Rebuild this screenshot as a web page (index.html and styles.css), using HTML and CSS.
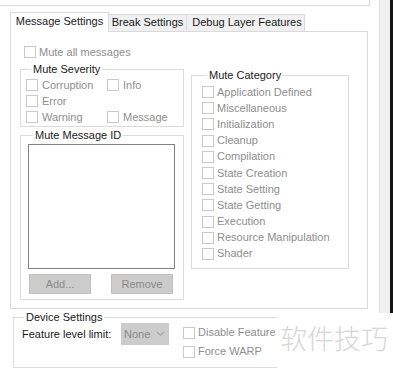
FILE: index.html
```html
<!DOCTYPE html>
<html>
<head>
    <meta charset="UTF-8">
    <title>Debug Layer</title>
    <link rel="stylesheet" href="styles.css">
</head>
<body>
<div class="dialog">
    <div class="topbox"></div>
    <div class="tabs">
        <div class="tab tab-active">Message Settings</div>
        <div class="tab tab-break">Break Settings</div>
        <div class="tab tab-debug">Debug Layer Features</div>
    </div>
    <div class="page">
        <div class="check-row mute-all"><span class="box"></span>Mute all messages</div>
        <div class="cols">
            <div class="col-left">
                <fieldset class="group severity">
                    <legend>Mute Severity</legend>
                    <div class="sev-grid">
                        <div class="check-row"><span class="box"></span>Corruption</div>
                        <div class="check-row"><span class="box"></span>Info</div>
                        <div class="check-row"><span class="box"></span>Error</div>
                        <div class="check-row"></div>
                        <div class="check-row"><span class="box"></span>Warning</div>
                        <div class="check-row"><span class="box"></span>Message</div>
                    </div>
                </fieldset>
                <fieldset class="group msgid">
                    <legend>Mute Message ID</legend>
                    <div class="listbox"></div>
                    <div class="btns">
                        <div class="btn">Add...</div>
                        <div class="btn">Remove</div>
                    </div>
                </fieldset>
            </div>
            <fieldset class="group category">
                <legend>Mute Category</legend>
                <div class="cat-list">
                    <div class="check-row"><span class="box"></span>Application Defined</div>
                    <div class="check-row"><span class="box"></span>Miscellaneous</div>
                    <div class="check-row"><span class="box"></span>Initialization</div>
                    <div class="check-row"><span class="box"></span>Cleanup</div>
                    <div class="check-row"><span class="box"></span>Compilation</div>
                    <div class="check-row"><span class="box"></span>State Creation</div>
                    <div class="check-row"><span class="box"></span>State Setting</div>
                    <div class="check-row"><span class="box"></span>State Getting</div>
                    <div class="check-row"><span class="box"></span>Execution</div>
                    <div class="check-row"><span class="box"></span>Resource Manipulation</div>
                    <div class="check-row"><span class="box"></span>Shader</div>
                </div>
            </fieldset>
        </div>
    </div>
    <fieldset class="group device">
        <legend>Device Settings</legend>
        <div class="dev-row">
            <div class="dev-label">Feature level limit:</div>
            <div class="combo">None
                <svg width="9" height="6" viewBox="0 0 9 6"><polyline points="1,1 4.5,4.5 8,1" fill="none" stroke="#a8a8a8" stroke-width="1.2"/></svg>
            </div>
            <div class="dev-checks">
                <div class="check-row"><span class="box"></span>Disable Feature</div>
                <div class="check-row"><span class="box"></span>Force WARP</div>
            </div>
        </div>
    </fieldset>
</div>
<div class="rail"></div>
<div class="edge"></div>
<div class="watermark">软件技巧</div>
</body>
</html>
```

FILE: styles.css
```css
* {
    margin: 0;
    padding: 0;
    box-sizing: border-box;
}
body {
    width: 393px;
    height: 373px;
    overflow: hidden;
    display: flex;
    align-items: flex-start;
    background: #fff;
    color: #1a1a1a;
    font: 11px/13px "Liberation Sans", Arial, sans-serif;
    position: relative;
}
.dialog {
    width: 379px;
    flex: none;
}
.rail {
    width: 11px;
    height: 313px;
    background: #f0f0f0;
    border-left: 1px solid #e0e0e0;
}
.edge {
    width: 3px;
    height: 313px;
    background: #161616;
}
.topbox {
    width: 370px;
    height: 6px;
    border-right: 1px solid #dadada;
    border-bottom: 1px solid #dadada;
}

/* tabs */
.tabs {
    display: flex;
    align-items: flex-end;
    height: 19px;
    margin: 6px 0 0 10px;
}
.tab {
    height: 17px;
    line-height: 15px;
    text-align: center;
    background: #f0f0f0;
    border: 1px solid #d9d9d9;
    border-bottom: none;
    white-space: nowrap;
}
.tab-active {
    width: 99px;
    height: 20px;
    line-height: 17px;
    background: #fff;
    margin-bottom: -1px;
    position: relative;
    z-index: 1;
}
.tab-break {
    width: 78px;
    border-left: none;
}
.tab-debug {
    width: 118px;
    border-left: none;
    padding-left: 3px;
}
.page {
    width: 358px;
    height: 278px;
    margin-left: 10px;
    border: 1px solid #d9d9d9;
    padding: 12px 0 0 9px;
}

/* checkboxes */
.check-row {
    display: flex;
    align-items: center;
    height: 16px;
    color: #8e8e8e;
    white-space: nowrap;
}
.box {
    width: 12px;
    height: 12px;
    border: 1px solid #c9c9c9;
    background: #fff;
    margin-right: 3px;
    flex: none;
}
.mute-all {
    margin-left: 4px;
}

/* group boxes */
.group {
    border: 1px solid #dcdcdc;
}
.group legend {
    margin-left: 5px;
    padding: 0 2px;
    line-height: 13px;
    color: #1a1a1a;
}
.cols {
    display: flex;
    align-items: flex-start;
    margin-top: 3px;
}
.col-left {
    width: 164px;
}
.severity {
    padding: 1px 0 0 5px;
    height: 64px;
}
.sev-grid {
    display: grid;
    grid-template-columns: 81px 1fr;
}
.sev-grid .box {
    margin-right: 4px;
}
.msgid {
    margin-top: 2px;
    padding: 2px 0 5px 7px;
}
.listbox {
    width: 147px;
    height: 125px;
    border: 1px solid #828282;
    background: #fff;
}
.btns {
    display: flex;
    gap: 20px;
    margin: 5px 0 0 1px;
}
.btn {
    width: 62px;
    height: 20px;
    line-height: 18px;
    text-align: center;
    background: #cccccc;
    border: 1px solid #c2c2c2;
    color: #8a8a8a;
}
.category {
    width: 158px;
    margin: 6px 0 0 7px;
    padding: 2px 0 6px 10px;
}
.cat-list .check-row {
    height: 16.2px;
}

/* device settings */
.device {
    width: 358px;
    margin: 2px 0 0 13px;
    padding: 0 0 6px 8px;
}
.device legend {
    margin-left: 2px;
    line-height: 12px;
}
.dev-row {
    display: flex;
    align-items: flex-start;
}
.dev-label {
    width: 99px;
    line-height: 22px;
}
.combo {
    width: 48px;
    height: 22px;
    line-height: 22px;
    padding-left: 3px;
    background: #cccccc;
    color: #8a8a8a;
    display: flex;
    align-items: center;
    gap: 6px;
}
.dev-checks {
    margin-left: 14px;
}
.dev-checks .check-row {
    height: 19px;
}
.watermark {
    position: absolute;
    left: 277px;
    top: 313px;
    width: 116px;
    height: 60px;
    background: #fff;
    padding-left: 3px;
    line-height: 50px;
    font-size: 27px;
    font-weight: 300;
    color: #d6d6d6;
    font-family: "Noto Sans CJK SC", sans-serif;
}
```
